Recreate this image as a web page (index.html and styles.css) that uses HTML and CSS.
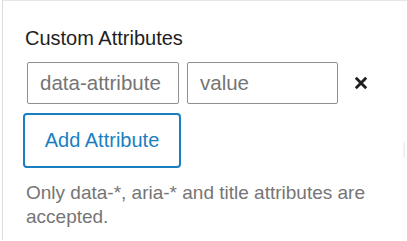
FILE: index.html
```html
<!DOCTYPE html>
<html>
<head>
<meta charset="utf-8">
<link rel="stylesheet" href="styles.css">
</head>
<body>
<div class="panel">
  <div class="title">Custom Attributes</div>
  <div class="row">
    <input class="field field-name" type="text" placeholder="data-attribute">
    <input class="field field-value" type="text" placeholder="value">
    <button class="remove" aria-label="Remove">
      <svg width="14" height="14" viewBox="0 0 14 14"><path d="M1.8 1.8 L12.2 12.2 M12.2 1.8 L1.8 12.2" stroke="#1e1e1e" stroke-width="2.8" fill="none"/></svg>
    </button>
  </div>
  <button class="add">Add Attribute</button>
  <p class="help">Only data-*, aria-* and title attributes are accepted.</p>
</div>
<div class="scroll-mark"></div>
</body>
</html>
```
FILE: styles.css
```css
html, body {
  margin: 0;
  padding: 0;
  background: #fff;
  font-family: "Liberation Sans", Arial, sans-serif;
}
.panel {
  margin-left: 2px;
  border-left: 1px solid #dcdcdc;
  border-top: 1px solid #e6e6e6;
  padding: 25px 0 0 20px;
  height: 240px;
  box-sizing: border-box;
}
.title {
  font-size: 20px;
  line-height: 24px;
  color: #1e1e1e;
  padding-left: 2px;
}
.row {
  display: flex;
  align-items: center;
  margin-top: 12px;
  padding-left: 4px;
}
.field {
  box-sizing: border-box;
  height: 42px;
  border: 1px solid #8f8f8f;
  border-radius: 2px;
  padding: 0 12px;
  font-family: "Liberation Sans", Arial, sans-serif;
  font-size: 20.5px;
  color: #1e1e1e;
  margin: 0;
  outline: none;
}
.field::placeholder {
  color: #757575;
}
.field-name {
  width: 152px;
}
.field-value {
  width: 151px;
  margin-left: 8px;
}
.remove {
  margin-left: 16px;
  border: 0;
  background: none;
  padding: 0;
  width: 14px;
  height: 14px;
  display: flex;
}
.add {
  display: block;
  box-sizing: border-box;
  margin-top: 9px;
  width: 158px;
  height: 55px;
  border: 2px solid #1a7fc1;
  border-radius: 4px;
  background: #fff;
  color: #1a7fc1;
  font-family: "Liberation Sans", Arial, sans-serif;
  font-size: 20px;
  padding: 0;
}
.help {
  margin: 13px 0 0;
  padding-left: 3px;
  font-size: 19px;
  line-height: 23.5px;
  color: #757575;
  width: 360px;
}
.scroll-mark {
  position: absolute;
  left: 403px;
  top: 142px;
  width: 2px;
  height: 16px;
  background: #f2f2f2;
}
```
